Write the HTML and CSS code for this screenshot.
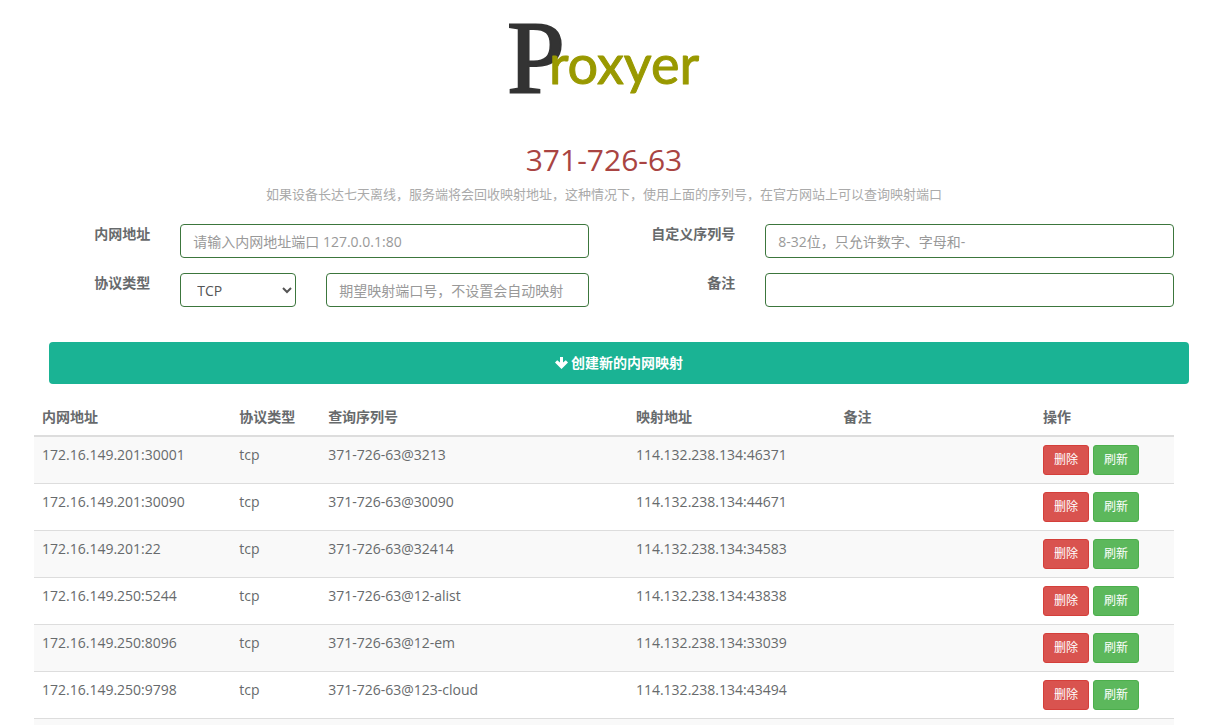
FILE: index.html
```html
<!DOCTYPE html>
<html lang="zh-CN">
<head>
  <meta charset="UTF-8" />
  <meta name="viewport" content="width=device-width, initial-scale=1.0" />
  <title>Proxyer</title>
  <link rel="stylesheet" href="styles.css">
</head>
<body>
  <div class="container">
    <header>
      <svg class="logo" width="200" height="120" viewBox="0 0 200 120" role="img" aria-label="Proxyer">
        <text class="logo-p" x="3" y="93">P</text>
        <text class="logo-rest" x="45" y="84">roxyer</text>
      </svg>
      <h1>371-726-63</h1>
      <p class="tip">如果设备长达七天离线，服务端将会回收映射地址，这种情况下，使用上面的序列号，在官方网站上可以查询映射端口</p>
    </header>

    <form>
      <div class="fields">
        <div class="form-group">
          <label for="addr">内网地址</label>
          <div class="controls">
            <input type="text" id="addr" placeholder="请输入内网地址端口 127.0.0.1:80">
          </div>
        </div>
        <div class="form-group">
          <label for="serial">自定义序列号</label>
          <div class="controls">
            <input type="text" id="serial" placeholder="8-32位，只允许数字、字母和-">
          </div>
        </div>
        <div class="form-group">
          <label for="protocol">协议类型</label>
          <div class="controls split">
            <select id="protocol">
              <option>TCP</option>
            </select>
            <input type="text" id="port" aria-label="映射端口号" placeholder="期望映射端口号，不设置会自动映射">
          </div>
        </div>
        <div class="form-group">
          <label for="remark">备注</label>
          <div class="controls">
            <input type="text" id="remark">
          </div>
        </div>
      </div>
      <button type="button" class="btn-create">
        <svg width="13" height="12" viewBox="0 0 13 12" aria-hidden="true">
          <path d="M5 0h3v5.6l2.8-2.4L13 5.6 6.5 12 0 5.6l2.2-2.4L5 5.6z" fill="#fff"/>
        </svg>
        创建新的内网映射
      </button>
    </form>

    <table>
      <thead>
        <tr>
          <th class="col-addr">内网地址</th>
          <th class="col-type">协议类型</th>
          <th class="col-serial">查询序列号</th>
          <th class="col-map">映射地址</th>
          <th class="col-remark">备注</th>
          <th>操作</th>
        </tr>
      </thead>
      <tbody>
        <tr>
          <td>172.16.149.201:30001</td>
          <td>tcp</td>
          <td>371-726-63@3213</td>
          <td>114.132.238.134:46371</td>
          <td></td>
          <td><div class="actions"><button type="button" class="btn btn-danger">删除</button><button type="button" class="btn btn-success">刷新</button></div></td>
        </tr>
        <tr>
          <td>172.16.149.201:30090</td>
          <td>tcp</td>
          <td>371-726-63@30090</td>
          <td>114.132.238.134:44671</td>
          <td></td>
          <td><div class="actions"><button type="button" class="btn btn-danger">删除</button><button type="button" class="btn btn-success">刷新</button></div></td>
        </tr>
        <tr>
          <td>172.16.149.201:22</td>
          <td>tcp</td>
          <td>371-726-63@32414</td>
          <td>114.132.238.134:34583</td>
          <td></td>
          <td><div class="actions"><button type="button" class="btn btn-danger">删除</button><button type="button" class="btn btn-success">刷新</button></div></td>
        </tr>
        <tr>
          <td>172.16.149.250:5244</td>
          <td>tcp</td>
          <td>371-726-63@12-alist</td>
          <td>114.132.238.134:43838</td>
          <td></td>
          <td><div class="actions"><button type="button" class="btn btn-danger">删除</button><button type="button" class="btn btn-success">刷新</button></div></td>
        </tr>
        <tr>
          <td>172.16.149.250:8096</td>
          <td>tcp</td>
          <td>371-726-63@12-em</td>
          <td>114.132.238.134:33039</td>
          <td></td>
          <td><div class="actions"><button type="button" class="btn btn-danger">删除</button><button type="button" class="btn btn-success">刷新</button></div></td>
        </tr>
        <tr>
          <td>172.16.149.250:9798</td>
          <td>tcp</td>
          <td>371-726-63@123-cloud</td>
          <td>114.132.238.134:43494</td>
          <td></td>
          <td><div class="actions"><button type="button" class="btn btn-danger">删除</button><button type="button" class="btn btn-success">刷新</button></div></td>
        </tr>
        <tr>
          <td></td>
          <td></td>
          <td></td>
          <td></td>
          <td></td>
          <td></td>
        </tr>
      </tbody>
    </table>
  </div>
</body>
</html>
```

FILE: styles.css
```css
* {
  box-sizing: border-box;
}

body {
  margin: 0;
  padding: 0 21px 0 19px;
  font-family: "Open Sans", "Noto Sans CJK SC", sans-serif;
  font-size: 14px;
  line-height: 20px;
  color: #676a6c;
  background: #fff;
}

.container {
  max-width: 1170px;
  margin: 0 auto;
  padding: 0 15px;
}

header {
  text-align: center;
}

.logo {
  display: block;
  margin: 0 auto;
  overflow: visible;
}

.logo-p {
  font-family: "Liberation Serif", serif;
  font-size: 104px;
  fill: #333;
  stroke: #333;
  stroke-width: 2;
}

.logo-rest {
  font-family: Lato, sans-serif;
  font-size: 54px;
  fill: #990;
  stroke: #990;
  stroke-width: 1;
  stroke-linejoin: round;
}

h1 {
  margin: 23px 0 8px;
  font-size: 30px;
  font-weight: 400;
  line-height: 33px;
  color: #a94442;
}

.tip {
  margin: 0;
  font-size: 13px;
  color: #aaa;
}

form {
  margin: 20px -15px 15px;
}

.fields {
  display: grid;
  grid-template-columns: 1fr 1fr;
  row-gap: 15px;
}

.form-group {
  display: grid;
  grid-template-columns: 1fr 3fr;
}

label {
  padding-right: 15px;
  font-weight: 700;
  text-align: right;
}

.controls {
  padding: 0 15px;
}

.split {
  display: grid;
  grid-template-columns: 116px 1fr;
  column-gap: 30px;
}

input,
select {
  display: block;
  width: 100%;
  height: 34px;
  padding: 6px 12px;
  border: 1px solid #3c763d;
  border-radius: 4px;
  background: #fff;
  font: inherit;
  color: #555;
}

input::placeholder {
  color: #999;
}

.btn-create {
  display: flex;
  align-items: center;
  justify-content: center;
  gap: 3px;
  width: calc(100% - 30px);
  height: 42px;
  margin: 35px 0 0 30px;
  border: 0;
  border-radius: 4px;
  background: #1ab394;
  color: #fff;
  font: inherit;
  font-weight: 700;
}

table {
  width: 100%;
  table-layout: fixed;
  border-collapse: separate;
  border-spacing: 0;
}

th,
td {
  padding: 8px;
  text-align: left;
  vertical-align: top;
}

th {
  border-bottom: 2px solid #ddd;
}

.col-addr {
  width: 17.3%;
}

.col-type {
  width: 7.8%;
}

.col-serial {
  width: 27%;
}

.col-map {
  width: 18.2%;
}

.col-remark {
  width: 17.5%;
}

td {
  border-top: 1px solid #ddd;
}

tbody tr:first-child td {
  border-top: 0;
}

tbody tr:nth-child(odd) {
  background: #f9f9f9;
}

.actions {
  display: flex;
  gap: 4px;
}

.btn {
  height: 30px;
  padding: 0 10px;
  border: 1px solid;
  border-radius: 3px;
  font: inherit;
  font-size: 12px;
  color: #fff;
}

.btn-danger {
  background: #d9534f;
  border-color: #d43f3a;
}

.btn-success {
  background: #5cb85c;
  border-color: #4cae4c;
}
```
